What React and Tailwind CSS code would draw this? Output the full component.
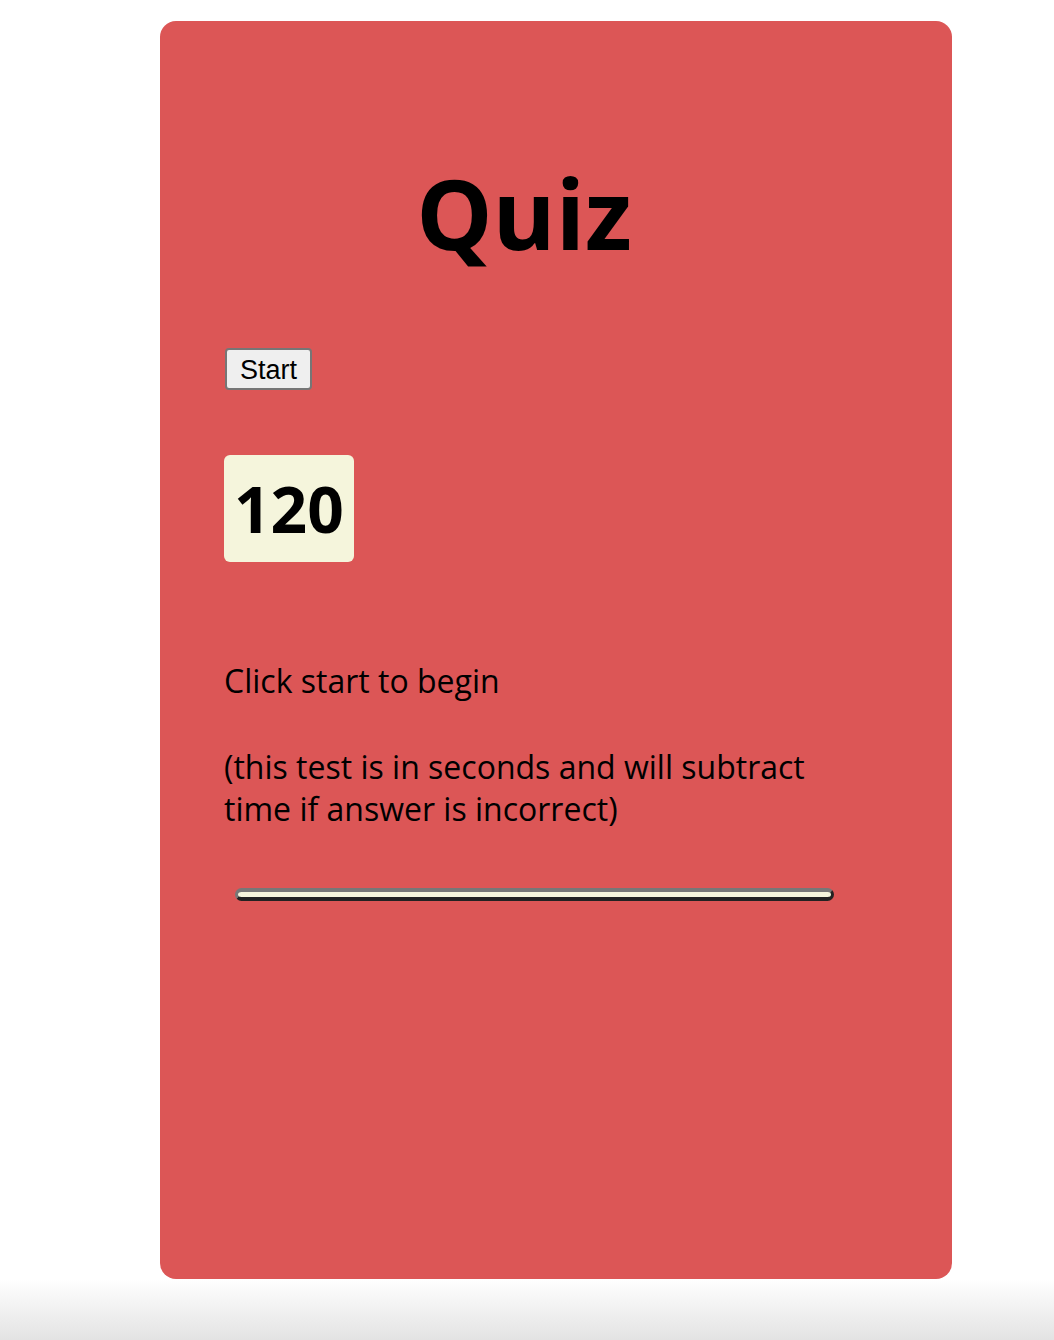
const App = () => {
  return (
    <div className="h-[1340px] flex flex-col bg-white font-['Open_Sans',sans-serif]">
      <div className="h-[21px]" />
      <div className="ml-[160px] w-[792px] h-[1258px] rounded-[16px] bg-[#dc5656] px-[64px] pt-[126px]">
        <div className="w-[604px]">
          <h1 className="w-[600px] text-center text-[96px] font-bold leading-[131px] text-black">
            Quiz
          </h1>

          <button className="mt-[70px] ml-[1px] block h-[42px] px-[13px] pt-[1px] rounded-[4px] border-2 border-[#767676] bg-[#efefef] text-[27px] leading-[30px] text-black font-['Liberation_Sans',Arial,sans-serif]">
            Start
          </button>

          <div className="mt-[65px] inline-block rounded-[6px] bg-[#f5f5dc] px-[10px] py-[10px] text-[64px] font-bold leading-[87px] text-black">
            120
          </div>

          <p className="mt-[97px] text-[32px] text-black leading-[43px]">
            Click start to begin
          </p>
          <p className="mt-[44px] text-[32px] text-black leading-[42px]">
            (this test is in seconds and will subtract time if answer is incorrect)
          </p>

          <div className="mt-[58px] ml-[11px] w-[599px] h-[13px] rounded-full border-[3px] border-t-[4px] border-b-[4px] border-t-[#777777] border-l-[#777777] border-b-[#222222] border-r-[#222222] bg-[#f5f5dc]" />
        </div>
      </div>
      <div className="flex-1 bg-gradient-to-b from-white to-[#e3e3e3]" />
    </div>
  );
};

export default App;
